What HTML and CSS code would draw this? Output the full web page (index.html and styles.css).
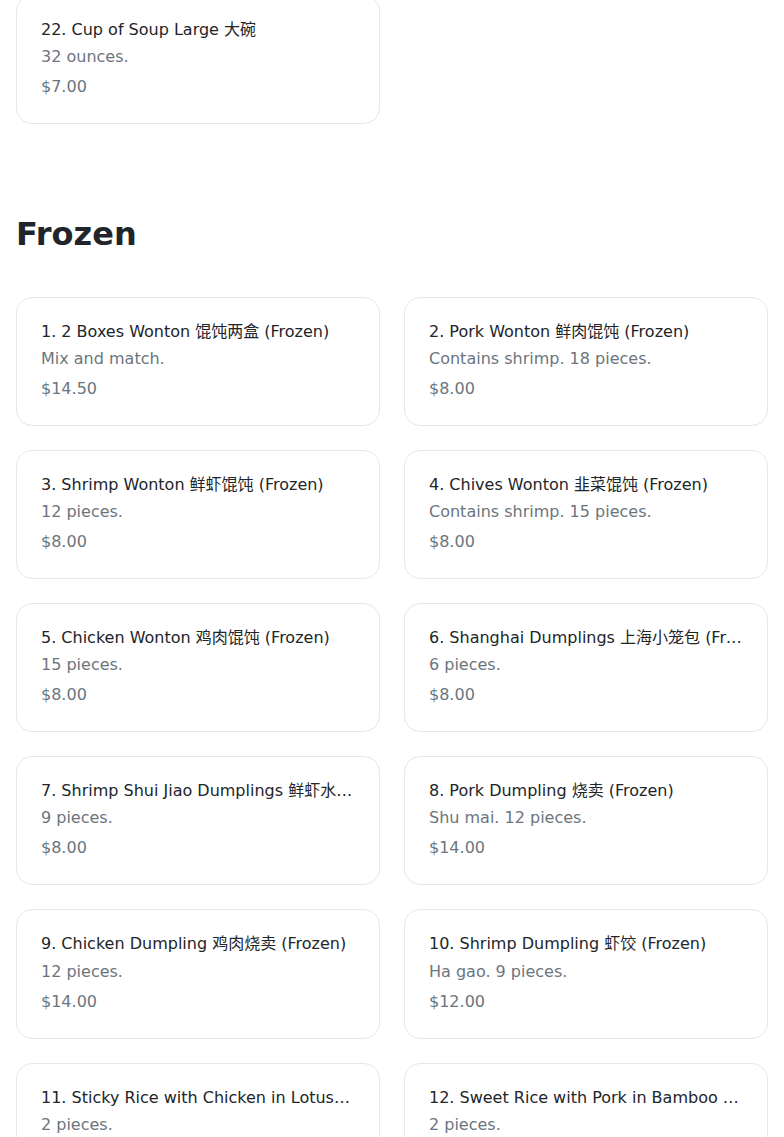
FILE: index.html
```html
<!DOCTYPE html>
<html lang="en">
<head>
<meta charset="utf-8">
<title>Menu</title>
<link rel="stylesheet" href="styles.css">
</head>
<body>
<main class="page">
  <section class="section">
    <div class="grid">
      <div class="card">
        <div class="title">22. Cup of Soup Large 大碗</div>
        <div class="desc">32 ounces.</div>
        <div class="price">$7.00</div>
      </div>
    </div>
  </section>

  <section class="section">
    <h2 class="heading">Frozen</h2>
    <div class="grid">
      <div class="card">
        <div class="title">1. 2 Boxes Wonton 馄饨两盒 (Frozen)</div>
        <div class="desc">Mix and match.</div>
        <div class="price">$14.50</div>
      </div>
      <div class="card">
        <div class="title">2. Pork Wonton 鲜肉馄饨 (Frozen)</div>
        <div class="desc">Contains shrimp. 18 pieces.</div>
        <div class="price">$8.00</div>
      </div>
      <div class="card">
        <div class="title">3. Shrimp Wonton 鲜虾馄饨 (Frozen)</div>
        <div class="desc">12 pieces.</div>
        <div class="price">$8.00</div>
      </div>
      <div class="card">
        <div class="title">4. Chives Wonton 韭菜馄饨 (Frozen)</div>
        <div class="desc">Contains shrimp. 15 pieces.</div>
        <div class="price">$8.00</div>
      </div>
      <div class="card">
        <div class="title">5. Chicken Wonton 鸡肉馄饨 (Frozen)</div>
        <div class="desc">15 pieces.</div>
        <div class="price">$8.00</div>
      </div>
      <div class="card">
        <div class="title">6. Shanghai Dumplings 上海小笼包 (Frozen)</div>
        <div class="desc">6 pieces.</div>
        <div class="price">$8.00</div>
      </div>
      <div class="card">
        <div class="title">7. Shrimp Shui Jiao Dumplings 鲜虾水饺 (Frozen)</div>
        <div class="desc">9 pieces.</div>
        <div class="price">$8.00</div>
      </div>
      <div class="card">
        <div class="title">8. Pork Dumpling 烧卖 (Frozen)</div>
        <div class="desc">Shu mai. 12 pieces.</div>
        <div class="price">$14.00</div>
      </div>
      <div class="card">
        <div class="title">9. Chicken Dumpling 鸡肉烧卖 (Frozen)</div>
        <div class="desc">12 pieces.</div>
        <div class="price">$14.00</div>
      </div>
      <div class="card">
        <div class="title">10. Shrimp Dumpling 虾饺 (Frozen)</div>
        <div class="desc">Ha gao. 9 pieces.</div>
        <div class="price">$12.00</div>
      </div>
      <div class="card">
        <div class="title">11. Sticky Rice with Chicken in Lotus Leaf 糯米鸡 (Frozen)</div>
        <div class="desc">2 pieces.</div>
        <div class="price">$10.00</div>
      </div>
      <div class="card">
        <div class="title">12. Sweet Rice with Pork in Bamboo Leaf 粽子 (Frozen)</div>
        <div class="desc">2 pieces.</div>
        <div class="price">$10.00</div>
      </div>
    </div>
  </section>
</main>
</body>
</html>
```

FILE: styles.css
```css
html, body {
  margin: 0;
  padding: 0;
  background: #ffffff;
}

body {
  font-family: "DejaVu Sans", "Noto Sans CJK SC", sans-serif;
  color: #212529;
  font-size: 16px;
}

.page {
  padding: 0 16px;
  margin-top: -5px;
}

.section + .section {
  margin-top: 91px;
}

.heading {
  margin: 0 0 43px 0;
  font-size: 32px;
  line-height: 1.2;
  font-weight: 700;
  color: #212529;
}

.grid {
  display: grid;
  grid-template-columns: 1fr 1fr;
  gap: 24px;
}

.card {
  border: 1px solid #e6e7ea;
  border-radius: 16px;
  padding: 24px;
  background: #fff;
  min-width: 0;
}

.title {
  line-height: 1.2;
  margin-bottom: 6px;
  white-space: nowrap;
  overflow: hidden;
  text-overflow: ellipsis;
  color: #212529;
}

.desc {
  line-height: 1.5;
  margin-bottom: 6px;
  color: #6c757d;
}

.price {
  line-height: 1.5;
  color: #6c757d;
}
```
